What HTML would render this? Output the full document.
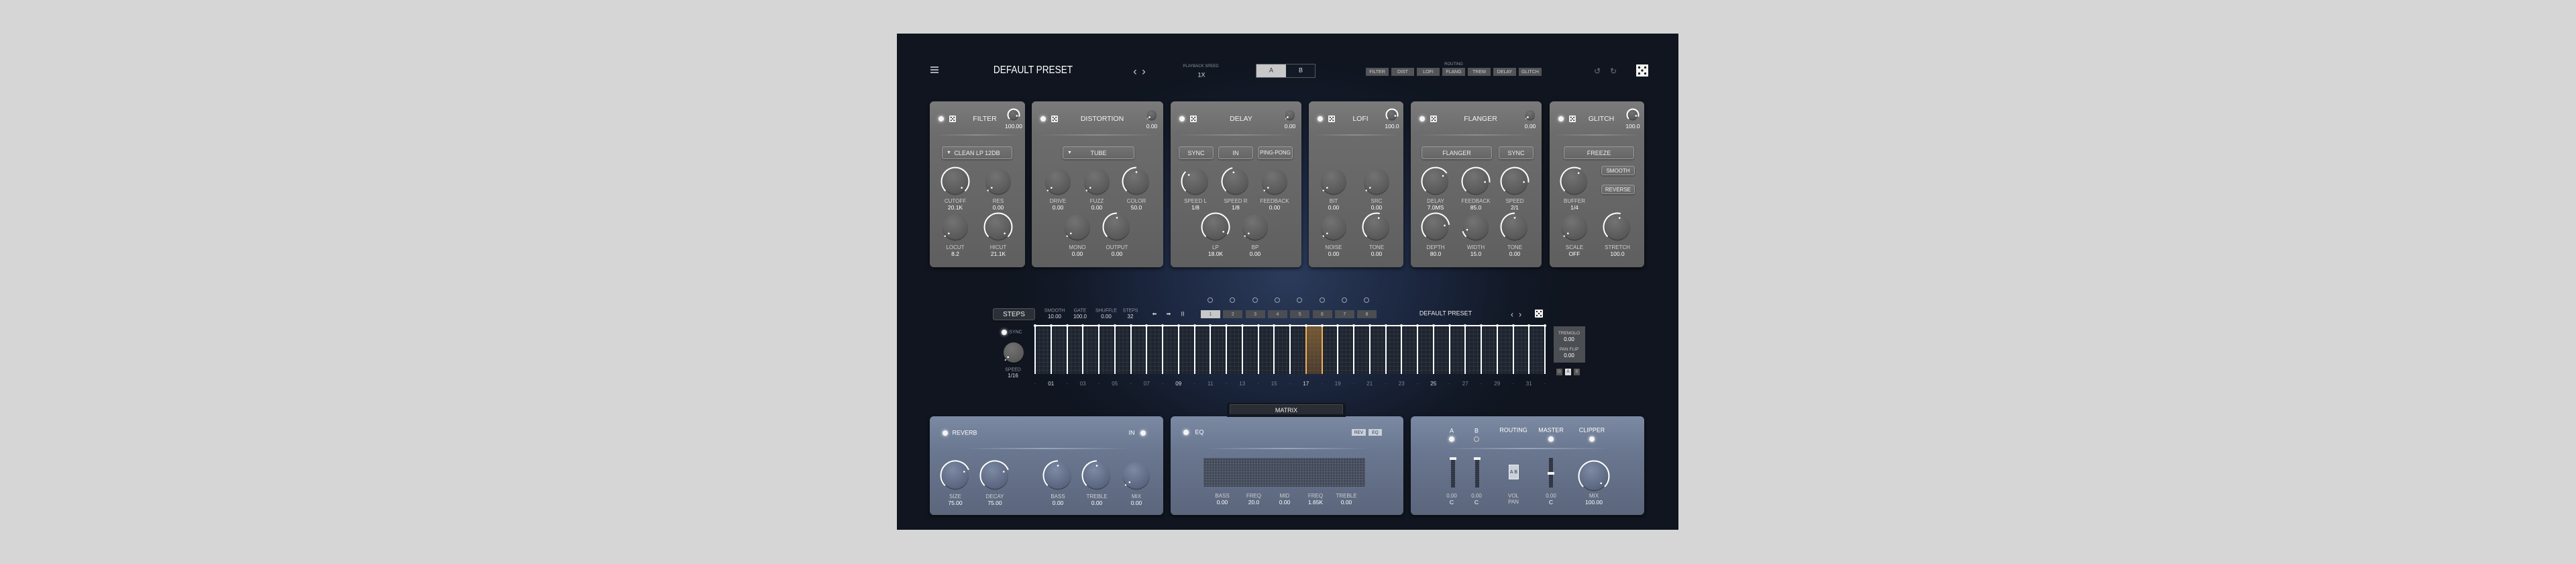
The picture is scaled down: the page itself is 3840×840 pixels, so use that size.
<!DOCTYPE html>
<html><head><meta charset="utf-8">
<style>
*{margin:0;padding:0;box-sizing:border-box}
body{width:3840px;height:840px;background:#d6d6d6;position:relative;overflow:hidden;font-family:"Liberation Sans",sans-serif;color:#e8e8e8}
.a{position:absolute}
#plug{position:absolute;left:1337px;top:50px;width:1165px;height:739px;background:radial-gradient(ellipse 420px 330px at 583px 360px,#2b3b5a 0%,#1c2740 45%,#121926 80%,#10151f 100%);overflow:hidden}
.t{position:absolute;transform:translate(-50%,-50%);white-space:nowrap;text-align:center;line-height:1}
.mod{position:absolute;top:151px;height:247px;border-radius:6px;background:linear-gradient(180deg,#7b7b7b 0%,#6c6c6c 20%,#666 60%,#5f5f5f 100%);box-shadow:0 2px 6px rgba(0,0,0,.6)}
.mod:after{content:"";position:absolute;left:4%;right:4%;top:49px;height:2px;background:linear-gradient(90deg,transparent,#8e8e8e,transparent)}
.bp{position:absolute;top:620px;height:147px;border-radius:6px;background:linear-gradient(180deg,#7b89a2 0%,#6a7790 35%,#5b667c 100%);box-shadow:0 2px 6px rgba(0,0,0,.6)}
.bp:after{content:"";position:absolute;left:15%;right:15%;top:47px;height:2px;background:linear-gradient(90deg,transparent,#9aa6bb,transparent)}
.btn{position:absolute;border:1px solid #9a9a9a;border-radius:3px;background:linear-gradient(#727272,#676767);font-size:9px;color:#eee;display:flex;align-items:center;justify-content:center;box-shadow:0 1px 2px rgba(0,0,0,.4)}
.rb{position:absolute;top:101px;height:12px;width:34px;background:#525457;font-size:7px;color:#ccc;display:flex;align-items:center;justify-content:center}
.lbl{font-size:8px;color:#cfcfcf}
.val{font-size:8.5px;color:#fff}
.pw{position:absolute;width:8px;height:8px;border-radius:50%;background:#f4f4f4;box-shadow:0 0 5px #fff;transform:translate(-50%,-50%)}
.dice{position:absolute;width:9px;height:9px;background:#f2f2f2;border-radius:1px;transform:translate(-50%,-50%)}
.dice:before{content:"";position:absolute;inset:1.5px;background:radial-gradient(circle,#222 0.9px,transparent 1.1px) 0 0/3px 3px}
</style></head><body>
<div id="plug"></div>
<div id="root" class="a" style="left:0;top:0;width:3840px;height:840px"></div>
<script>
const R=document.getElementById('root');
function add(h){R.insertAdjacentHTML('beforeend',h);}
function txt(x,y,s,cls,extra){add(`<div class="t ${cls||''}" style="left:${x}px;top:${y}px;${extra||''}">${s}</div>`);}
function knob(cx,cy,r,f,blue){
 const s=r*2+10,c=s/2;
 const a0=225,a1=225-270*f; // degrees, math convention
 const rad=d=>d*Math.PI/180;
 const ar=r+1.5;
 const p=(d,rr)=>[c+rr*Math.cos(rad(d)),c-rr*Math.sin(rad(d))];
 let arc='';
 if(f>0.01){const [x0,y0]=p(a0,ar),[x1,y1]=p(a1,ar);const large=(270*f)>180?1:0;
  arc=`<path d="M${x0} ${y0} A${ar} ${ar} 0 ${large} 1 ${x1} ${y1}" fill="none" stroke="#fff" stroke-width="2"/>`;}
 else{const [x0,y0]=p(a0,ar),[x1,y1]=p(a0-6,ar);arc=`<path d="M${x0} ${y0} A${ar} ${ar} 0 0 1 ${x1} ${y1}" fill="none" stroke="#fff" stroke-width="2"/>`;}
 const [dx,dy]=p(a1,r*0.72);
 const g1=blue?'#7c89a2':'#737373',g2=blue?'#56617a':'#555';
 add(`<svg class="a" style="left:${cx-c}px;top:${cy-c}px" width="${s}" height="${s}"><defs><radialGradient id="g${cx}${cy}" cx="40%" cy="30%" r="75%"><stop offset="0" stop-color="${g1}"/><stop offset="1" stop-color="${g2}"/></radialGradient></defs><circle cx="${c}" cy="${c+1.5}" r="${r}" fill="rgba(0,0,0,.35)"/><circle cx="${c}" cy="${c}" r="${r}" fill="url(#g${cx}${cy})"/>${arc}<circle cx="${dx}" cy="${dy}" r="1.3" fill="#fff"/></svg>`);
}
// top bar
add(`<div class="a" style="left:1387px;top:99px;width:12px;height:1.5px;background:#aab;box-shadow:0 4px 0 #aab,0 8px 0 #aab"></div>`);
txt(1540,105,'DEFAULT PRESET','','font-size:16px;color:#fff;transform:translate(-50%,-50%) scaleX(.85)');
txt(1692,106,'&#8249;','','font-size:17px;color:#ccc');txt(1705,106,'&#8250;','','font-size:17px;color:#ccc');
txt(1790,99,'PLAYBACK SPEED','','font-size:6px;color:#8a93a3');txt(1791,112,'1X','','font-size:9px;color:#ddd');
add(`<div class="a" style="left:1872px;top:95px;width:89px;height:21px;border:1px solid #55595f;background:#141a25"></div><div class="a" style="left:1873px;top:96px;width:44px;height:19px;background:#c8c8c8"></div>`);
txt(1895,105,'A','','font-size:9px;color:#333');txt(1939,105,'B','','font-size:9px;color:#ddd');
txt(2167,96,'ROUTING','','font-size:6px;color:#8a93a3');
['FILTER','DIST','LOFI','FLANG','TREM','DELAY','GLITCH'].forEach((s,i)=>add(`<div class="rb" style="left:${2036+i*38}px">${s}</div>`));
txt(2381,106,'&#8634;','','font-size:12px;color:#777');txt(2405,106,'&#8635;','','font-size:12px;color:#777');
add(`<div class="dice" style="left:2448px;top:105px;width:18px;height:18px"></div>`);
add(`<svg class="a" style="left:2439px;top:96px" width="18" height="18"><rect width="18" height="18" rx="1" fill="#f2f2f2"/><g fill="#111"><circle cx="4.5" cy="4.5" r="1.6"/><circle cx="13.5" cy="4.5" r="1.6"/><circle cx="9" cy="9" r="1.6"/><circle cx="4.5" cy="13.5" r="1.6"/><circle cx="13.5" cy="13.5" r="1.6"/></g></svg>`);
// modules
const mods=[
 {x0:1386,x1:1528,t:'FILTER',tx:1468,hv:'100.00',hf:1},
 {x0:1538,x1:1734,t:'DISTORTION',tx:1643,hv:'0.00',hf:0},
 {x0:1745,x1:1940,t:'DELAY',tx:1850,hv:'0.00',hf:0},
 {x0:1951,x1:2092,t:'LOFI',tx:2028,hv:'100.0',hf:1},
 {x0:2103,x1:2298,t:'FLANGER',tx:2207,hv:'0.00',hf:0},
 {x0:2310,x1:2451,t:'GLITCH',tx:2387,hv:'100.0',hf:1}];
mods.forEach(m=>{
 add(`<div class="mod" style="left:${m.x0}px;width:${m.x1-m.x0}px"></div>`);
 add(`<div class="pw" style="left:${m.x0+17}px;top:177px"></div>`);
 add(`<svg class="a" style="left:${m.x0+29}px;top:172px" width="10" height="10"><rect width="10" height="10" rx="1" fill="#f0f0f0"/><g fill="#222"><circle cx="2.8" cy="2.8" r="1"/><circle cx="7.2" cy="2.8" r="1"/><circle cx="5" cy="5" r="1"/><circle cx="2.8" cy="7.2" r="1"/><circle cx="7.2" cy="7.2" r="1"/></g></svg>`);
 txt(m.tx,177,m.t,'','font-size:10.5px;color:#f2f2f2');
 knob(m.x1-17,171,7,m.hf*0.9);
 txt(m.x1-17,188,m.hv,'val');
});
function btn(x0,x1,y0,y1,s,fs){add(`<div class="btn" style="left:${x0}px;top:${y0}px;width:${x1-x0}px;height:${y1-y0}px;${fs?'font-size:'+fs+'px':''}">${s}</div>`);}
btn(1404,1509,218,237,'<span style="position:absolute;left:6px;font-size:7px">&#9660;</span>CLEAN LP 12DB');
btn(1584,1691,218,237,'<span style="position:absolute;left:6px;font-size:7px">&#9660;</span>TUBE');
btn(1757,1809,218,237,'SYNC');btn(1816,1868,218,237,'IN');btn(1875,1927,218,237,'PING-PONG',8);
btn(2119,2224,218,237,'FLANGER');btn(2234,2286,218,237,'SYNC');
btn(2331,2436,218,237,'FREEZE');btn(2387,2437,247,261,'SMOOTH',8);btn(2387,2437,275,289,'REVERSE',8);
const K=[
 [1424,1,'CUTOFF','20.1K',1],[1488,1,'RES','0.00',0],[1424,2,'LOCUT','8.2',0],[1488,2,'HICUT','21.1K',1],
 [1577,1,'DRIVE','0.00',0],[1635,1,'FUZZ','0.00',0],[1694,1,'COLOR','50.0',.5],[1606,2,'MONO','0.00',0],[1665,2,'OUTPUT','0.00',.5],
 [1782,1,'SPEED L','1/8',.33],[1842,1,'SPEED R','1/8',.45],[1900,1,'FEEDBACK','0.00',0],[1812,2,'LP','18.0K',.95],[1871,2,'BP','0.00',0],
 [1988,1,'BIT','0.00',0],[2052,1,'SRC','0.00',0],[1988,2,'NOISE','0.00',0],[2052,2,'TONE','0.00',.55],
 [2140,1,'DELAY','7.0MS',.7],[2200,1,'FEEDBACK','85.0',.85],[2258,1,'SPEED','2/1',.85],[2140,2,'DEPTH','80.0',.8],[2200,2,'WIDTH','15.0',.1],[2258,2,'TONE','0.00',.5],
 [2347,1,'BUFFER','1/4',.6],[2347,2,'SCALE','OFF',0],[2411,2,'STRETCH','100.0',.55]];
K.forEach(k=>{const cy=k[1]==1?270:338,ly=k[1]==1?300:369;knob(k[0],cy,19,k[4]);txt(k[0],ly,k[2],'lbl');txt(k[0],ly+9,k[3],'val');});
// sequencer
for(let i=0;i<8;i++)add(`<div class="a" style="left:${1800+i*33.3}px;top:443px;width:8px;height:8px;border:1px solid #9aa3b3;border-radius:50%"></div>`);
add(`<div class="btn" style="left:1480px;top:459px;width:63px;height:18px;background:#2a2f38;border-color:#555;font-size:10px">STEPS</div>`);
[['SMOOTH','10.00',1572],['GATE','100.0',1610],['SHUFFLE','0.00',1649],['STEPS','32',1685]].forEach(a=>{txt(a[2],463,a[0],'','font-size:7px;color:#8e97a6');txt(a[2],472,a[1],'','font-size:8px;color:#ddd');});
txt(1721,468,'&#11013;','','font-size:8px;color:#ddd');txt(1742,468,'&#10145;','','font-size:8px;color:#ddd');txt(1763,468,'II','','font-size:9px;color:#ddd');
for(let i=0;i<8;i++){const on=i==0;add(`<div class="a" style="left:${1790+i*33.3}px;top:462px;width:29px;height:12px;background:${on?'#c8c8c8':'#4a4d52'};font-size:7px;color:${on?'#555':'#bbb'};display:flex;align-items:center;justify-content:center">${i+1}</div>`);}
txt(2155,467,'DEFAULT PRESET','','font-size:9px;color:#eee');
txt(2254,468,'&#8249;','','font-size:13px;color:#ccc');txt(2266,468,'&#8250;','','font-size:13px;color:#ccc');
add(`<svg class="a" style="left:2288px;top:461px" width="12" height="12"><rect width="12" height="12" rx="1" fill="#f2f2f2"/><g fill="#111"><circle cx="3" cy="3" r="1.1"/><circle cx="9" cy="3" r="1.1"/><circle cx="6" cy="6" r="1.1"/><circle cx="3" cy="9" r="1.1"/><circle cx="9" cy="9" r="1.1"/></g></svg>`);
add(`<div class="pw" style="left:1497px;top:495px"></div>`);txt(1514,495,'SYNC','','font-size:7px;color:#8e97a6');
knob(1511,525,15,0.02);txt(1510,551,'SPEED','','font-size:7px;color:#8e97a6');txt(1510,560,'1/16','','font-size:8px;color:#ddd');
// grid
add(`<div class="a" style="left:1543px;top:485px;width:760px;height:72px;background-color:#1f2530;background-image:linear-gradient(90deg,rgba(255,255,255,.06) 1px,transparent 1px),linear-gradient(rgba(255,255,255,.06) 1px,transparent 1px);background-size:5.94px 6px"></div>`);
add(`<div class="a" style="left:1947px;top:485px;width:24px;height:72px;background:linear-gradient(rgba(220,150,60,.45),rgba(170,110,40,.3))"></div>`);
add(`<div class="a" style="left:1543px;top:484px;width:760px;height:2px;background:#fff"></div>`);
for(let i=0;i<=32;i++){const x=1543+i*23.75;const or=(i==17||i==18);
 add(`<div class="a" style="left:${x-1}px;top:485px;width:2px;height:72px;background:${or?'#f0b060':'#fff'}"></div><div class="a" style="left:${x-2}px;top:483px;width:4px;height:4px;border-radius:50%;background:#fff"></div>`);
 if(i%2==1)txt(x,572,String(i).padStart(2,'0'),'','font-size:8px;color:'+([1,9,17,25].includes(i)?'#ddd':'#7d8594'));else txt(x,572,'·','','font-size:8px;color:#777');}
add(`<div class="a" style="left:2316px;top:486px;width:47px;height:54px;background:#4b4e53"></div>`);
txt(2339,497,'TREMOLO','','font-size:6.5px;color:#ccc');txt(2339,506,'0.00','','font-size:8px;color:#fff');
txt(2339,521,'PAN FLIP','','font-size:6.5px;color:#ccc');txt(2339,530,'0.00','','font-size:8px;color:#fff');
['G','A','B'].forEach((s,i)=>add(`<div class="a" style="left:${2320+i*13}px;top:549px;width:9px;height:10px;background:${i==1?'#ddd':'#555'};font-size:6px;color:${i==1?'#333':'#aaa'};display:flex;align-items:center;justify-content:center">${s}</div>`));
// matrix tab
add(`<div class="a" style="left:1829px;top:600px;width:177px;height:22px;background:#111620;border-radius:3px"></div><div class="a" style="left:1833px;top:602px;width:169px;height:18px;background:#2a2d33;border:1px solid #444;font-size:9px;color:#eee;display:flex;align-items:center;justify-content:center">MATRIX</div>`);
// bottom panels
[[1386,1734],[1745,2092],[2103,2451]].forEach(p=>add(`<div class="bp" style="left:${p[0]}px;width:${p[1]-p[0]}px"></div>`));
add(`<div class="a" style="left:1829px;top:617px;width:177px;height:4px;background:#111620"></div>`);
add(`<div class="pw" style="left:1409px;top:645px"></div>`);txt(1438,645,'REVERB','','font-size:9px;color:#fff');
txt(1687,645,'IN','','font-size:9px;color:#fff');add(`<div class="pw" style="left:1704px;top:645px"></div>`);
[[1424,'SIZE','75.00',.75],[1483,'DECAY','75.00',.75],[1577,'BASS','0.00',.5],[1635,'TREBLE','0.00',.5],[1694,'MIX','0.00',0]].forEach(k=>{knob(k[0],708,20,k[3],1);txt(k[0],740,k[1],'lbl');txt(k[0],749,k[2],'val');});
add(`<div class="pw" style="left:1768px;top:644px"></div>`);txt(1788,644,'EQ','','font-size:9px;color:#fff');
add(`<div class="a" style="left:2015px;top:639px;width:21px;height:10px;background:#c8d0dc;font-size:6.5px;color:#334;display:flex;align-items:center;justify-content:center">REV</div><div class="a" style="left:2040px;top:639px;width:20px;height:10px;background:#c8d0dc;font-size:6.5px;color:#334;display:flex;align-items:center;justify-content:center">EQ</div>`);
add(`<div class="a" style="left:1794px;top:682px;width:241px;height:43px;background-color:#414858;background-image:linear-gradient(90deg,rgba(255,255,255,.09) 1px,transparent 1px),linear-gradient(rgba(255,255,255,.09) 1px,transparent 1px);background-size:4px 4px"></div>`);
[[1822,'BASS','0.00'],[1869,'FREQ','20.0'],[1915,'MID','0.00'],[1961,'FREQ','1.65K'],[2007,'TREBLE','0.00']].forEach(k=>{txt(k[0],739,k[1],'lbl');txt(k[0],748,k[2],'val');});
txt(2164,642,'A','','font-size:9px;color:#fff');add(`<div class="pw" style="left:2164px;top:654px"></div>`);
txt(2201,642,'B','','font-size:9px;color:#fff');add(`<div class="a" style="left:2197px;top:650px;width:8px;height:8px;border:1px solid #ccc;border-radius:50%"></div>`);
txt(2256,641,'ROUTING','','font-size:9px;color:#fff');txt(2312,641,'MASTER','','font-size:9px;color:#fff');txt(2373,641,'CLIPPER','','font-size:9px;color:#fff');
add(`<div class="pw" style="left:2312px;top:654px"></div><div class="pw" style="left:2373px;top:654px"></div>`);
[[2166,683],[2202,683],[2312,705]].forEach(f=>add(`<div class="a" style="left:${f[0]-3}px;top:682px;width:6px;height:44px;background:repeating-linear-gradient(#2d3340 0 2px,#3a4150 2px 3px)"></div><div class="a" style="left:${f[0]-5}px;top:${f[1]-2}px;width:10px;height:4px;background:#f2f2f2"></div>`));
add(`<div class="a" style="left:2249px;top:692px;width:15px;height:22px;background:#c8d0dc;border:1px solid #eee;font-size:7px;color:#333;display:flex;align-items:center;justify-content:space-around">A<span>B</span></div>`);
[[2164,'0.00','C'],[2201,'0.00','C'],[2312,'0.00','C']].forEach(k=>{txt(k[0],739,k[1],'lbl');txt(k[0],748,k[2],'val');});
txt(2256,739,'VOL','lbl');txt(2256,748,'PAN','lbl');
knob(2376,709,21,1,1);txt(2376,739,'MIX','lbl');txt(2376,748,'100.00','val');
</script>
</body></html>
